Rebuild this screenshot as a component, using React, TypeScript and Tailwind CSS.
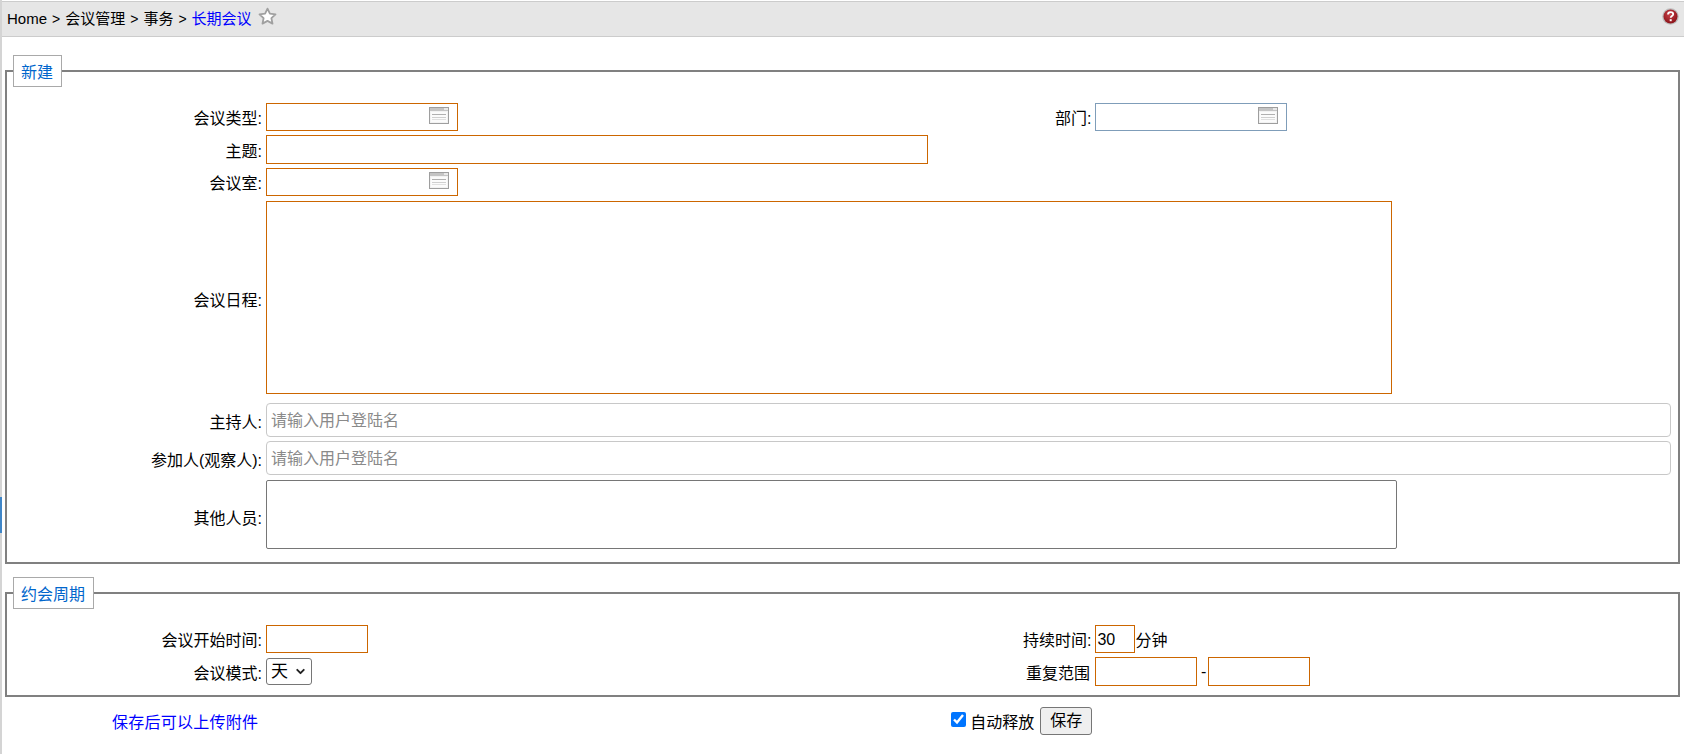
import { ChevronDown } from 'lucide-react';

const ORANGE = 'border border-[#cc6600]';

function LookupIcon() {
  return (
    <svg width="20" height="17" viewBox="0 0 20 17" className="shrink-0">
      <rect x="0.5" y="0.5" width="19" height="16" fill="#f2f2f2" stroke="#9e9e9e" />
      <rect x="1" y="1" width="18" height="3" fill="#c4c4c4" />
      <rect x="15" y="1" width="4" height="2" fill="#e8e8e8" />
      <rect x="2" y="5" width="16" height="10" fill="#fbfbfb" />
      <rect x="3" y="7" width="14" height="1" fill="#b0b0b0" />
      <rect x="3" y="10" width="14" height="1" fill="#cfcfcf" />
      <rect x="3" y="12" width="14" height="1" fill="#e0e0e0" />
    </svg>
  );
}

function StarIcon() {
  return (
    <svg width="19" height="18" viewBox="0 0 19 18">
      <path
        d="M9.5 1.6l2.4 5 5.6.8-4.1 3.8 1.1 5.4-5-2.7-5 2.7 1.1-5.4L1.5 7.4l5.6-.8z"
        fill="#ffffff"
        stroke="#a0a0a0"
        strokeWidth="1.8"
        strokeLinejoin="round"
      />
    </svg>
  );
}

function HelpIcon() {
  return (
    <svg width="17" height="17" viewBox="0 0 17 17">
      <defs>
        <radialGradient id="helpBall" cx="45%" cy="35%" r="65%">
          <stop offset="0%" stopColor="#c8434a" />
          <stop offset="100%" stopColor="#8c1219" />
        </radialGradient>
      </defs>
      <circle cx="8.5" cy="8.5" r="8.3" fill="#bdbdbd" />
      <circle cx="8.5" cy="8.5" r="7" fill="url(#helpBall)" />
      <path
        d="M6 6.5c0-1.5 1.1-2.4 2.6-2.4s2.6.9 2.6 2.2c0 1.8-2.5 1.8-2.5 3.5"
        fill="none"
        stroke="#fff"
        strokeWidth="1.8"
      />
      <rect x="7.7" y="11.2" width="2" height="2" fill="#fff" />
    </svg>
  );
}

function Label({ text, className = '' }: { text: string; className?: string }) {
  return <label className={`shrink-0 text-right ${className}`}>{text}</label>;
}

function LookupInput({ blue }: { blue?: boolean }) {
  return (
    <div
      className={`flex h-[28px] w-[192px] items-center justify-end pr-[8px] pb-[3px] border ${
        blue ? 'border-[#7f9db9]' : 'border-[#cc6600]'
      }`}
    >
      <LookupIcon />
    </div>
  );
}

function Legend({ text }: { text: string }) {
  return (
    <legend className="ml-[6px] border border-[#a9a9a9] bg-white pl-[7px] pr-[8px] h-[32px] leading-[33px] text-[#0066cc] text-[16px]">
      {text}
    </legend>
  );
}

export default function App() {
  return (
    <div className="relative h-[754px] overflow-hidden bg-white text-[16px] text-black [font-family:'Liberation_Sans','Noto_Sans_CJK_SC',sans-serif]">
      {/* left frame edge */}
      <div className="absolute left-0 top-0 h-full w-[2px] bg-[#d4d4d4]" />
      <div className="absolute left-0 top-[497px] h-[36px] w-[2px] bg-[#3f86c8]" />

      <div className="ml-[2px] mt-[1px] flex h-[36px] items-center justify-between border-y border-[#cccccc] bg-[#e6e6e6] pl-[5px] pr-[5px]">
        <div className="flex items-center text-[15px]">
          <span>Home</span>
          <span className="mx-[5px] text-[14px]">&gt;</span>
          <span>会议管理</span>
          <span className="mx-[5px] text-[14px]">&gt;</span>
          <span>事务</span>
          <span className="mx-[5px] text-[14px]">&gt;</span>
          <span className="text-[#0000ff]">长期会议</span>
          <span className="ml-[6px] -mt-[6px]">
            <StarIcon />
          </span>
        </div>
        <span className="-mt-[5px]">
          <HelpIcon />
        </span>
      </div>

      <fieldset className="ml-[5px] mr-[4px] mt-[18px] h-[509px] border-2 border-[#808080] px-0 pb-0 pt-0">
        <Legend text="新建" />
        <div className="mt-[16px] flex flex-col">
          <div className="flex h-[28px] items-center gap-[4px]">
            <Label text="会议类型:" className="w-[255px] pt-[4px]" />
            <LookupInput />
            <Label text="部门:" className="ml-[593px] pt-[4px]" />
            <LookupInput blue />
          </div>
          <div className="mt-[4px] flex h-[29px] items-center gap-[4px]">
            <Label text="主题:" className="w-[255px] pt-[4px]" />
            <input className={`h-[29px] w-[662px] ${ORANGE}`} />
          </div>
          <div className="mt-[4px] flex h-[28px] items-center gap-[4px]">
            <Label text="会议室:" className="w-[255px] pt-[4px]" />
            <LookupInput />
          </div>
          <div className="mt-[5px] flex h-[193px] items-center gap-[4px]">
            <Label text="会议日程:" className="w-[255px] pt-[6px]" />
            <textarea className={`h-[193px] w-[1126px] resize-none ${ORANGE}`} />
          </div>
          <div className="mt-[9px] flex h-[34px] items-center gap-[4px]">
            <Label text="主持人:" className="w-[255px] pt-[6px]" />
            <input
              placeholder="请输入用户登陆名"
              className="h-[34px] w-[1405px] rounded-[4px] border border-[#c8c8c8] px-[4px] pt-[1px] placeholder:text-[#8a8a8a]"
            />
          </div>
          <div className="mt-[4px] flex h-[34px] items-center gap-[4px]">
            <Label text="参加人(观察人):" className="w-[255px] pt-[6px]" />
            <input
              placeholder="请输入用户登陆名"
              className="h-[34px] w-[1405px] rounded-[4px] border border-[#c8c8c8] px-[4px] pt-[1px] placeholder:text-[#8a8a8a]"
            />
          </div>
          <div className="mt-[5px] flex h-[69px] items-center gap-[4px]">
            <Label text="其他人员:" className="w-[255px] pt-[8px]" />
            <textarea className="h-[69px] w-[1131px] resize-none rounded-[2px] border border-[#767676]" />
          </div>
        </div>
      </fieldset>

      <fieldset className="ml-[5px] mr-[4px] mt-[13px] h-[120px] border-2 border-[#808080] p-0">
        <Legend text="约会周期" />
        <div className="mt-[16px] flex flex-col">
          <div className="flex h-[28px] items-center gap-[4px]">
            <Label text="会议开始时间:" className="w-[255px] pt-[4px]" />
            <input className={`h-[28px] w-[102px] ${ORANGE}`} />
            <Label text="持续时间:" className="ml-[651px] pt-[4px]" />
            <input defaultValue="30" className={`h-[28px] w-[40px] px-[1px] pt-[1px] ${ORANGE}`} />
            <span className="-ml-[4px] pt-[4px]">分钟</span>
          </div>
          <div className="mt-[4px] flex h-[29px] items-center gap-[4px]">
            <Label text="会议模式:" className="w-[255px] pt-[4px]" />
            <div className="relative h-[27px] w-[46px]">
              <select className="h-full w-full appearance-none rounded-[3px] border border-[#767676] bg-white pl-[4px] text-[17px]">
                <option>天</option>
              </select>
              <ChevronDown
                size={13}
                strokeWidth={3.5}
                className="pointer-events-none absolute right-[5px] top-[7px] text-[#222]"
              />
            </div>
            <Label text="重复范围" className="ml-[705px] w-[70px] pr-[1px] pt-[4px]" />
            <input className={`h-[29px] w-[102px] ${ORANGE}`} />
            <span className="w-[3px]">-</span>
            <input className={`h-[29px] w-[102px] ${ORANGE}`} />
          </div>
        </div>
      </fieldset>

      <div className="mt-[9px] flex h-[30px] items-center">
        <a className="ml-[112px] pt-[4px] tracking-[0.25px] text-[#0000ff]">保存后可以上传附件</a>
        <input type="checkbox" defaultChecked className="ml-[693px] mb-[4px] h-[15px] w-[15px] accent-[#0075ff]" />
        <span className="ml-[4px] pt-[4px]">自动释放</span>
        <button className="ml-[6px] h-[28px] w-[52px] rounded-[3px] border border-[#767676] bg-[#efefef]">保存</button>
      </div>
    </div>
  );
}
